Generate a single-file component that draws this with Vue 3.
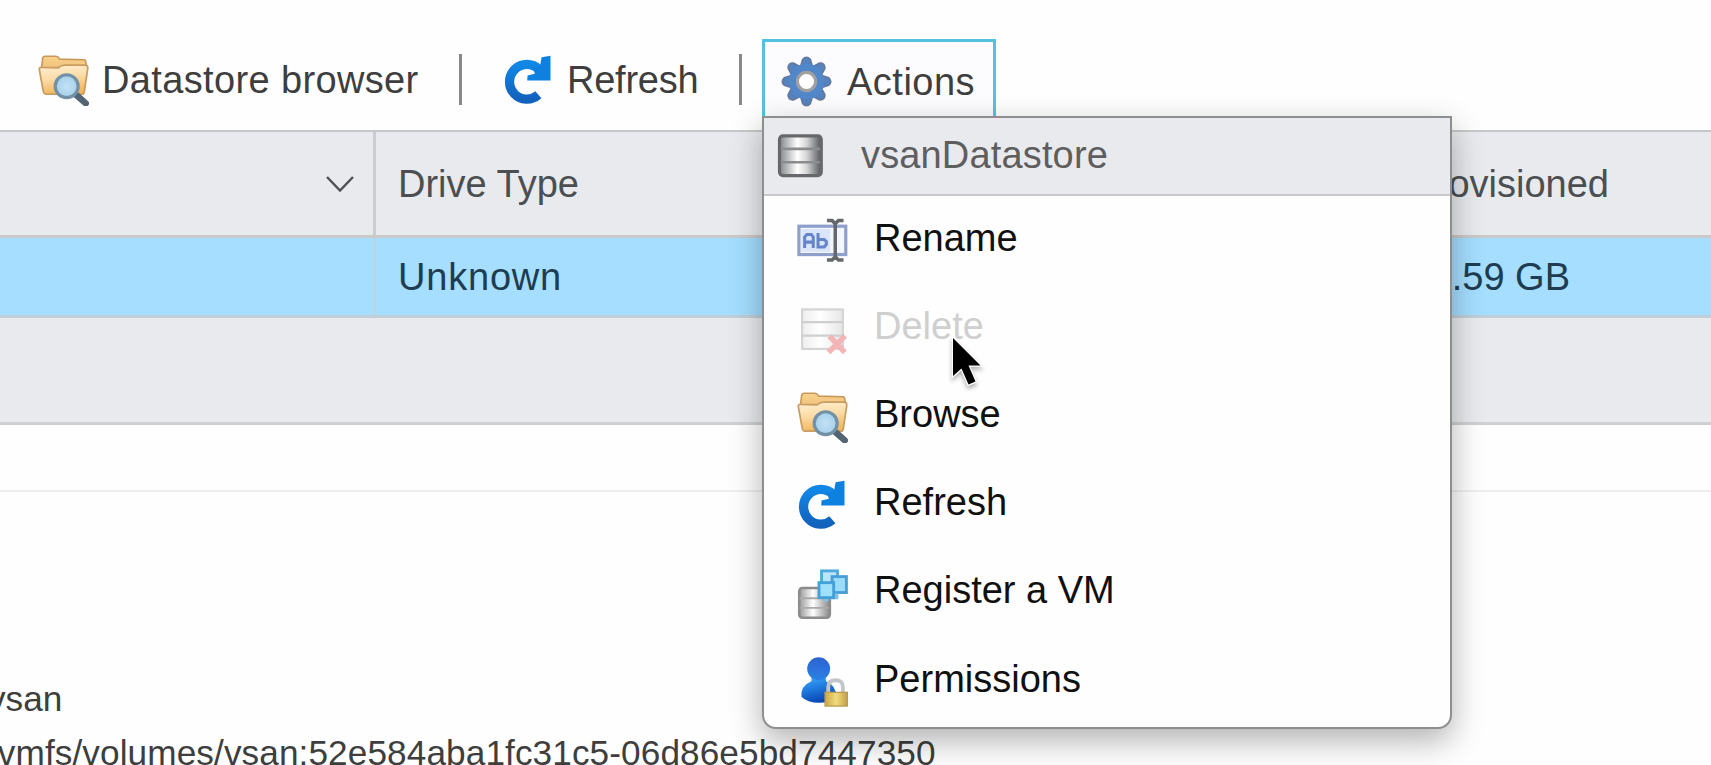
<script setup>
import { h } from 'vue'

const items = [
  { label: 'Rename', icon: 'rename' },
  { label: 'Delete', icon: 'delete', disabled: true },
  { label: 'Browse', icon: 'folder' },
  { label: 'Refresh', icon: 'refresh' },
  { label: 'Register a VM', icon: 'register' },
  { label: 'Permissions', icon: 'user' }
]

const teeth = [0, 45, 90, 135, 180, 225, 270, 315]

const el = (tag, attrs) => h(tag, attrs)

const shapes = {
  folder: () => [
    el('path', { d: 'M1.1 4.2 1.5.8Q1.7.4 2.2.4H5.6Q6.3.4 6.8 1.3L14.4 1.5Q15 1.6 15 2.3L15.3 4.2 14.2 12.2H2.3Z', fill: 'url(#gFolderBack)', stroke: '#c79858', 'stroke-width': 0.5 }),
    el('path', { d: 'M.4 4.5Q.4 3.8 1.2 3.9L6.3 4Q7.3 3.2 8.4 3.2H14.9Q15.7 3.3 15.6 4.3L14.5 11.7Q14.3 12.3 13.7 12.3H2.5Q1.9 12.3 1.7 11.6Z', fill: 'url(#gFolder)', stroke: '#c99d63', 'stroke-width': 0.55 }),
    el('path', { d: 'M11.4 12 15 15.2', stroke: '#536473', 'stroke-width': 2, 'stroke-linecap': 'round' }),
    el('circle', { cx: 9, cy: 9.8, r: 3.6, fill: 'url(#gLens)', stroke: '#7291a6', 'stroke-width': 1 })
  ],
  refresh: () => [
    el('path', { d: 'M11.1 12.5A5.45 5.45 0 1 1 11.3 4.5', fill: 'none', stroke: 'url(#gRefresh)', 'stroke-width': 2.9 }),
    el('path', { d: 'M12.1.7 14.9.2V8H7.6L7.7 6.4 10 5.9 9.4 4 11.6 3.6Z', fill: '#0e80df' })
  ],
  rename: () => [
    el('rect', { x: 0.6, y: 3.2, width: 14.7, height: 8.9, fill: '#f3f6fd', stroke: '#8f9fcb', 'stroke-width': 1 }),
    el('rect', { x: 1.4, y: 4.1, width: 9, height: 7.1, fill: '#dae5f9' }),
    el('path', { d: 'M2.4 10V6.6L3.1 5.8H4.5L5.1 6.6V10M2.4 8.2H5.1M6.6 5.3V9.7H8.5L9.2 9V8L8.5 7.4H6.6', fill: 'none', stroke: '#6685c9', 'stroke-width': 0.95 }),
    el('path', { d: 'M9.4 1.4H11L12 2.4 13 1.4H14.6M12 2V13.2M9.4 13.8H11L12 12.8 13 13.8H14.6', fill: 'none', stroke: '#66676b', 'stroke-width': 1.1 })
  ],
  delete: () => [
    el('rect', { x: 1.6, y: 1.7, width: 12.8, height: 12.4, fill: 'url(#gPale)', stroke: '#d5d5d5', 'stroke-width': 0.7 }),
    el('path', { d: 'M1.6 5.7H14.4M1.6 9.9H14.4', stroke: '#cfcfcf', 'stroke-width': 0.7 }),
    el('path', { d: 'M10.2 10.1 15 15.2M15.1 10 9.900 15.2', stroke: '#f3b5b5', 'stroke-width': 1.7 })
  ],
  register: () => [
    el('rect', { x: 0.7, y: 6.3, width: 9.6, height: 9.3, rx: 1, fill: 'url(#gMetal)', stroke: '#8c8c8c', 'stroke-width': 0.8 }),
    el('path', { d: 'M.8 9.5H10M.8 12.5H10', stroke: '#aaa', 'stroke-width': 0.6 }),
    el('rect', { x: 7.7, y: 0.9, width: 5, height: 4.6, fill: '#b9e6fb', stroke: '#4fa9dc', 'stroke-width': 0.9 }),
    el('rect', { x: 11, y: 2.7, width: 4.5, height: 5, fill: '#9bdcf9', stroke: '#489fd7', 'stroke-width': 0.9 }),
    el('path', { d: 'M12.4 8V9.2H9.2V10.5', fill: 'none', stroke: '#85c3e8', 'stroke-width': 1.2 }),
    el('rect', { x: 6.9, y: 4.6, width: 4.6, height: 4.7, fill: '#9fe0fb', stroke: '#459fd8', 'stroke-width': 0.9 })
  ],
  user: () => [
    el('path', { d: 'M4.6 6Q6.8 7.5 8.9 6L9.1 7.9Q12.3 9.2 12.3 12.8 10.2 14.7 7 14.7 3.2 14.7 1.4 12.8 1 9.4 4.5 7.9Z', fill: 'url(#gUser)' }),
    el('circle', { cx: 6.8, cy: 4, r: 3.6, fill: 'url(#gHead)' }),
    el('path', { d: 'M9.8 12V9.8Q9.8 7.6 12.1 7.6T14.4 9.8V12', fill: 'none', stroke: '#c3c6c9', 'stroke-width': 1.2 }),
    el('rect', { x: 8.8, y: 11.4, width: 7, height: 4.3, fill: 'url(#gLock)', stroke: '#b99c50', 'stroke-width': 0.4 })
  ],
  gear: () => [
    ...teeth.map((a) => el('path', { d: 'M5.9 4 6.8 1Q8-.3 9.2 1L10.1 4Z', transform: `rotate(${a} 8 8)`, fill: '#5682bd', stroke: '#64789b', 'stroke-width': 0.45 })),
    el('circle', { cx: 8, cy: 8, r: 5.6, fill: '#5287ca' }),
    el('circle', { cx: 8, cy: 8, r: 2.85, fill: '#fff', stroke: '#a3a19f', 'stroke-width': 1 })
  ],
  datastore: () => [
    el('rect', { x: 1.1, y: 1.5, width: 13.1, height: 12.5, rx: 1.1, fill: 'url(#gMetalDark)', stroke: '#67686b', 'stroke-width': 1 }),
    el('path', { d: 'M1.5 5.6H13.8M1.5 9.8H13.8', stroke: '#8b8c8e', 'stroke-width': 0.8 })
  ]
}

const Icon = (props) =>
  h('svg', { viewBox: '0 0 16 16', width: 51, height: 51, 'aria-hidden': 'true' }, shapes[props.name]())
Icon.props = ['name']
</script>

<template>
  <main class="page">
    <svg class="defs" width="0" height="0" aria-hidden="true">
      <defs>
        <linearGradient id="gFolderBack" x2="0" y2="1"><stop stop-color="#f9d18d" /><stop offset="1" stop-color="#dca655" /></linearGradient>
        <linearGradient id="gFolder" x2=".2" y2="1"><stop stop-color="#fff0d4" /><stop offset=".5" stop-color="#fbdca8" /><stop offset="1" stop-color="#f2b75f" /></linearGradient>
        <radialGradient id="gLens"><stop stop-color="#c4e2f6" /><stop offset="1" stop-color="#a5cfe9" /></radialGradient>
        <linearGradient id="gRefresh" x2="0" y2="1"><stop stop-color="#1187e6" /><stop offset="1" stop-color="#1262bd" /></linearGradient>
        <linearGradient id="gPale"><stop stop-color="#eee" /><stop offset=".45" stop-color="#fff" /><stop offset="1" stop-color="#e6e6e6" /></linearGradient>
        <linearGradient id="gMetal"><stop stop-color="#999" /><stop offset=".45" stop-color="#fff" /><stop offset="1" stop-color="#888" /></linearGradient>
        <linearGradient id="gMetalDark"><stop stop-color="#85868a" /><stop offset=".43" stop-color="#fff" /><stop offset=".65" stop-color="#d5d5d5" /><stop offset="1" stop-color="#55565a" /></linearGradient>
        <linearGradient id="gHead" x2="0" y2="1"><stop stop-color="#2c62cf" /><stop offset="1" stop-color="#2a82e4" /></linearGradient>
        <linearGradient id="gUser" x2=".3" y2="1"><stop stop-color="#4fb2f5" /><stop offset=".45" stop-color="#2384e6" /><stop offset="1" stop-color="#0a49b5" /></linearGradient>
        <linearGradient id="gLock"><stop stop-color="#cba747" /><stop offset=".5" stop-color="#f1dc7c" /><stop offset="1" stop-color="#c39f4a" /></linearGradient>
      </defs>
    </svg>

    <nav class="toolbar">
      <div class="tool browser"><Icon name="folder" /><span>Datastore browser</span></div>
      <i class="divider"></i>
      <div class="tool reload"><Icon name="refresh" /><span>Refresh</span></div>
      <i class="divider"></i>
      <div class="tool actions"><Icon name="gear" /><span>Actions</span></div>
    </nav>

    <section class="grid">
      <div class="row head">
        <div class="cell first">
          <svg width="30" height="20" viewBox="0 0 30 20"><path d="M2 3 15 16.5 28 3" fill="none" stroke="#505356" stroke-width="2.5" /></svg>
        </div>
        <div class="cell type">Drive Type</div>
        <div class="cell last">Provisioned</div>
      </div>
      <div class="row selected">
        <div class="cell first"></div>
        <div class="cell type unknown">Unknown</div>
        <div class="cell last size">.59 GB</div>
      </div>
      <div class="foot"></div>
    </section>

    <div class="gap"></div>
    <section class="details">
      <p class="kind">vsan</p>
      <p class="path">/vmfs/volumes/vsan:52e584aba1fc31c5-06d86e5bd7447350</p>
    </section>

    <div class="menu">
      <div class="title"><Icon name="datastore" /><span>vsanDatastore</span></div>
      <ul>
        <li v-for="item in items" :key="item.label" :class="{ disabled: item.disabled }">
          <Icon :name="item.icon" /><span>{{ item.label }}</span>
        </li>
      </ul>
    </div>

    <svg class="cursor" width="42" height="64" viewBox="0 0 42 64">
      <path d="M7 6V44L15.500 36.500 22.500 52.500 29.500 49.500 22.500 33.500H34.500Z" fill="#000" stroke="#fff" stroke-width="2.500" paint-order="stroke" />
    </svg>
  </main>
</template>

<style>
body { margin: 0; overflow: hidden; }
</style>

<style scoped>
.page {
  position: relative;
  box-sizing: border-box;
  width: 1711px;
  height: 765px;
  overflow: hidden;
  background: #fefefe;
  color: #3e3e3f;
  font: 38px/44px "Liberation Sans", Arial, sans-serif;
  white-space: nowrap;
}
.defs { position: absolute; }
svg { display: block; flex: none; }

.toolbar { display: flex; box-sizing: border-box; height: 130px; padding: 39px 0 0 38px; }
.tool { display: flex; align-items: center; height: 82px; }
.browser { width: 421px; letter-spacing: 0.36px; }
.browser span { margin-left: 13px; }
.divider { width: 3px; height: 51px; margin-top: 15px; background: #88898a; }
.reload { width: 234px; padding-left: 41px; margin-right: 2px; }
.reload span { margin-left: 13px; letter-spacing: -0.25px; }
.actions {
  box-sizing: border-box;
  width: 234px;
  height: 79px;
  margin-left: 20px;
  padding: 3px 0 0 16px;
  border: 3px solid #55c1e0;
  border-bottom: 0;
  background: #fcfcfe;
}
.actions span { margin-left: 15px; letter-spacing: 0.5px; }

.row { display: flex; box-sizing: border-box; }
.head { height: 108px; border-top: 2px solid #c5c7ca; border-bottom: 3px solid #cbcac9; background: #e8eaed; color: #4c4f52; }
.selected { height: 80px; border-bottom: 3px solid #c0cfd8; background: #a5deff; color: #203c50; }
.cell { display: flex; align-items: center; box-sizing: border-box; }
.first { width: 376px; border-right: 3px solid #cbced1; justify-content: flex-end; padding-right: 18px; }
.selected .first { border-color: #bed5e1; }
.type { flex: 1; padding-left: 22px; }
.unknown { letter-spacing: 0.8px; }
.last { width: 300px; justify-content: flex-end; padding-right: 102px; }
.size { padding-right: 141px; }
.foot { box-sizing: border-box; height: 107px; border-bottom: 3px solid #cfd0d2; background: #e9eaed; }
.gap { box-sizing: border-box; height: 67px; border-bottom: 2px solid #efefef; }

.details { padding-top: 180px; font-size: 35.2px; line-height: 54px; }
.details p { margin: 0; }
.details .kind { margin-left: -12px; }
.details .path { margin-left: -12px; letter-spacing: 0.09px; }

.menu {
  position: absolute;
  left: 762px;
  top: 116px;
  box-sizing: border-box;
  width: 690px;
  height: 613px;
  border: 2.5px solid #8d8e90;
  border-radius: 0 0 14px 14px;
  background: #fefefe;
  color: #101010;
  box-shadow: 0 12px 32px rgba(0, 0, 0, 0.3);
}
.title {
  display: flex;
  align-items: center;
  box-sizing: border-box;
  height: 78px;
  padding: 0 0 3px 12px;
  border-bottom: 2px solid #c9c9c9;
  background: #e9eaed;
  color: #5e5e60;
}
.title svg { margin-top: 3px; }
.title span { margin-left: 34px; letter-spacing: 0.15px; }
ul { list-style: none; margin: -2px 0 0; padding: 0; }
li { display: flex; align-items: center; height: 88.1px; padding-left: 33px; }
li svg { margin-top: 6px; }
li span { margin-left: 26px; }
li.disabled { color: #cfcfcf; }

.cursor { position: absolute; left: 946px; top: 332px; filter: drop-shadow(0 3px 2px rgba(0, 0, 0, 0.3)); }
</style>
